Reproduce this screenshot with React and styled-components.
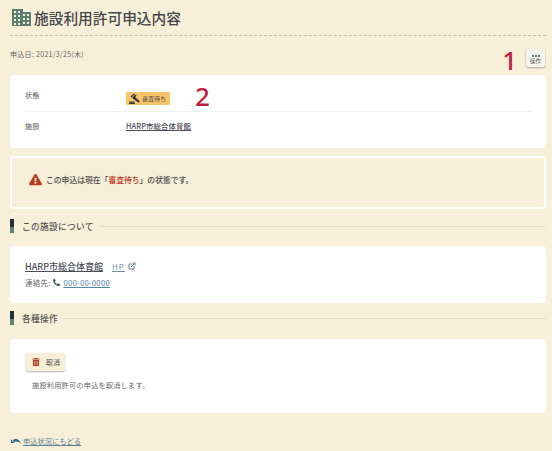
import React from 'react'
import styled, { createGlobalStyle } from 'styled-components'
import { FaExclamationTriangle, FaPhoneAlt, FaTrashAlt } from 'react-icons/fa'
import { FiExternalLink } from 'react-icons/fi'

const GlobalStyle = createGlobalStyle`
  html, body {
    margin: 0;
    padding: 0;
    background: #f7efd8;
    color: #4a4a4a;
    font-family: "Noto Sans CJK JP", "Noto Sans", sans-serif;
  }
`

const Page = styled.div`
  width: 536px;
  height: 451px;
  padding-left: 10px;
  overflow: hidden;
`

const Header = styled.h1`
  display: flex;
  align-items: center;
  gap: 3px;
  height: 36px;
  margin: 0;
  padding: 0 0 0 2px;
  box-sizing: border-box;
  border-bottom: 1px dashed #b9bfa8;
  font-size: 14.7px;
  line-height: 20px;
  font-weight: 500;
  color: #45484c;
`

const Toolbar = styled.div`
  display: flex;
  justify-content: space-between;
  height: 39px;
`

const DateText = styled.div`
  margin-top: 13px;
  font-size: 7px;
  line-height: 10px;
  letter-spacing: 0.3px;
  color: #666;
`

const ToolbarRight = styled.div`
  display: flex;
  align-items: flex-start;
  gap: 9px;
  padding: 13px 1px 0 0;
`

const Marker = styled.span`
  color: #c01c3f;
  font-family: "Noto Sans", sans-serif;
  font-size: 26px;
  line-height: 22px;
  font-weight: 500;
`

const MenuButton = styled.button`
  display: flex;
  flex-direction: column;
  align-items: center;
  width: 19px;
  height: 18px;
  padding: 6px 0 0;
  border: 0;
  border-radius: 2px;
  background: #f4f3f0;
  box-shadow: 0 1px 2px rgba(0, 0, 0, 0.3);
  color: #555;
  font-family: inherit;
  font-size: 5.5px;
  line-height: 6px;
`

const Dots = styled.i`
  display: block;
  width: 2px;
  height: 2px;
  margin-bottom: 1px;
  background: #5f7f74;
  box-shadow: 3px 0 0 #5f7f74, -3px 0 0 #5f7f74;
`

const Card = styled.section`
  background: #fff;
  border-radius: 4px;
  padding: ${p => p.$padding};
  height: ${p => p.$height}px;
  box-sizing: border-box;
`

const StatusRow = styled.div`
  display: flex;
  align-items: center;
  height: 37px;
  padding-top: 10px;
  box-sizing: border-box;
  border-bottom: 1px solid #f0f0ee;
`

const FacilityRow = styled.div`
  display: flex;
  align-items: center;
  height: 27px;
`

const RowLabel = styled.div`
  width: 101px;
  margin-bottom: ${p => p.$lift || 0}px;
  font-size: 7px;
  letter-spacing: 0.3px;
  color: #555;
`

const Badge = styled.span`
  display: inline-flex;
  align-items: center;
  gap: 2px;
  width: 44px;
  height: 13px;
  padding-left: 3px;
  box-sizing: border-box;
  background: #fbc368;
  color: #4a4a4a;
  font-size: 6px;
`

const StatusMarker = styled(Marker)`
  margin: 0 0 4px 25px;
`

const FacilityLink = styled.a`
  color: #4a4d55;
  font-size: 7.4px;
  font-weight: 500;
  letter-spacing: 0.1px;
  text-decoration: underline;
`

const Notice = styled.div`
  display: flex;
  align-items: center;
  gap: 4px;
  height: 53px;
  margin-top: 8px;
  padding: 0 0 7px 17px;
  box-sizing: border-box;
  border: 2px solid #fff;
  border-radius: 4px;
  font-size: 7.8px;
  font-weight: 500;
  color: #4a4a4a;
`

const Strong = styled.span`
  color: #b93a1e;
`

const SectionTitle = styled.h2`
  display: flex;
  align-items: center;
  height: 14px;
  margin: ${p => p.$top}px 0 ${p => p.$bottom}px;
  font-size: 8.7px;
  font-weight: 500;
  letter-spacing: 0.3px;
  color: #555;

  &::before {
    content: '';
    width: 4px;
    height: 14px;
    margin-right: 8px;
    background: linear-gradient(#23303a 0 55%, #5c8273 55% 100%);
  }

  &::after {
    content: '';
    flex: 1;
    height: 1px;
    margin-left: 5px;
    background: #e8e0bf;
  }
`

const FacilityLine = styled.div`
  display: flex;
  align-items: center;
  height: 14px;
  font-size: 9px;
`

const FacilityName = styled.a`
  color: #4a4d55;
  font-weight: 500;
  text-decoration: underline;
`

const HpLink = styled.a`
  display: inline-flex;
  align-items: center;
  gap: 3px;
  margin-left: 9px;
  color: #6b8fa8;
  font-size: 8px;
  letter-spacing: 1px;
  text-decoration: underline;

  svg {
    color: #5f7f94;
    stroke-width: 3;
  }
`

const Contact = styled.div`
  display: flex;
  align-items: center;
  gap: 3px;
  height: 12px;
  margin-top: 3px;
  font-size: 7.5px;
  letter-spacing: 0.2px;
  color: #666;
`

const Tel = styled.a`
  color: #4f86ad;
  text-decoration: underline;
  font-size: 7.8px;
`

const CancelButton = styled.button`
  display: flex;
  align-items: center;
  gap: 6px;
  width: 39px;
  height: 18px;
  padding: 0 0 0 6px;
  box-sizing: border-box;
  border: 0;
  border-radius: 2px;
  background: #f7efd8;
  box-shadow: 0 1px 2px rgba(0, 0, 0, 0.3);
  color: #4a4a4a;
  font-family: inherit;
  font-size: 7px;
`

const Help = styled.p`
  margin: 9px 0 0 6px;
  font-size: 7.1px;
  line-height: 10px;
  letter-spacing: 0.3px;
  color: #666;
`

const BackLink = styled.a`
  display: flex;
  align-items: center;
  gap: 2px;
  height: 12px;
  margin: 22px 0 0 1px;
  color: #5f7f94;
  font-size: 7.2px;
  letter-spacing: 0.1px;
  text-decoration: underline;
`

const BuildingIcon = () => (
  <svg width="19" height="17" viewBox="0 0 19 17">
    <path fill="#5c7f74" d="M0 0h11v3h8v14H0z" />
    <path
      fill="#f7efd8"
      d="M2 2h2v2H2zM6 2h2v2H6zM2 6h2v2H2zM6 6h2v2H6zM2 10h2v2H2zM6 10h2v2H6zM2 14h2v2H2zM6 14h2v2H6zM11 5h2v2h-2zM15 5h2v2h-2zM11 9h2v2h-2zM15 9h2v2h-2zM11 13h2v2h-2zM15 13h2v2h-2z"
    />
  </svg>
)

const GavelIcon = () => (
  <svg width="11" height="11" viewBox="0 0 11 11">
    <path fill="#30343a" d="M1.5 3.6 5 .4l.9.9-3.5 3.2zM3.2 5l2-2 5.6 5.4-1.2 1.3zM4 3.8l2.6-2.4 1 1L5 5z" />
    <path fill="#30343a" d="M.3 8.6h5v1H.3zM0 9.8h6V11H0z" />
  </svg>
)

const UndoIcon = () => (
  <svg width="10" height="7" viewBox="0 0 10 7">
    <path fill="#2c5f86" d="M0 1.2 3.6 5H.2zM1.8 2.2C4.4.2 7.6.3 10 5.8 7.8 3.6 5.4 3 3.4 4z" />
  </svg>
)

export default function App() {
  return (
    <Page>
      <GlobalStyle />
      <Header>
        <BuildingIcon />
        施設利用許可申込内容
      </Header>

      <Toolbar>
        <DateText>申込日: 2021/3/25(木)</DateText>
        <ToolbarRight>
          <Marker>1</Marker>
          <MenuButton>
            <Dots />
            操作
          </MenuButton>
        </ToolbarRight>
      </Toolbar>

      <Card $padding="0 14px 0 15px" $height={73}>
        <StatusRow>
          <RowLabel $lift={7}>状態</RowLabel>
          <Badge>
            <GavelIcon />
            審査待ち
          </Badge>
          <StatusMarker>2</StatusMarker>
        </StatusRow>
        <FacilityRow>
          <RowLabel>施設</RowLabel>
          <FacilityLink>HARP市総合体育館</FacilityLink>
        </FacilityRow>
      </Card>

      <Notice>
        <FaExclamationTriangle size={13} color="#b93a1e" />
        <span>
          この申込は現在「<Strong>審査待ち</Strong>」の状態です。
        </span>
      </Notice>

      <SectionTitle $top={10} $bottom={13}>この施設について</SectionTitle>

      <Card $padding="13px 15px 0" $height={57}>
        <FacilityLine>
          <FacilityName>HARP市総合体育館</FacilityName>
          <HpLink>
            HP
            <FiExternalLink size={8} />
          </HpLink>
        </FacilityLine>
        <Contact>
          連絡先:
          <FaPhoneAlt size={7} color="#3f5a5a" />
          <Tel>000-00-0000</Tel>
        </Contact>
      </Card>

      <SectionTitle $top={8} $bottom={14}>各種操作</SectionTitle>

      <Card $padding="14px 16px 0" $height={74}>
        <CancelButton>
          <FaTrashAlt size={8} color="#b93a1e" />
          取消
        </CancelButton>
        <Help>施設利用許可の申込を取消します。</Help>
      </Card>

      <BackLink>
        <UndoIcon />
        申込状況にもどる
      </BackLink>
    </Page>
  )
}
